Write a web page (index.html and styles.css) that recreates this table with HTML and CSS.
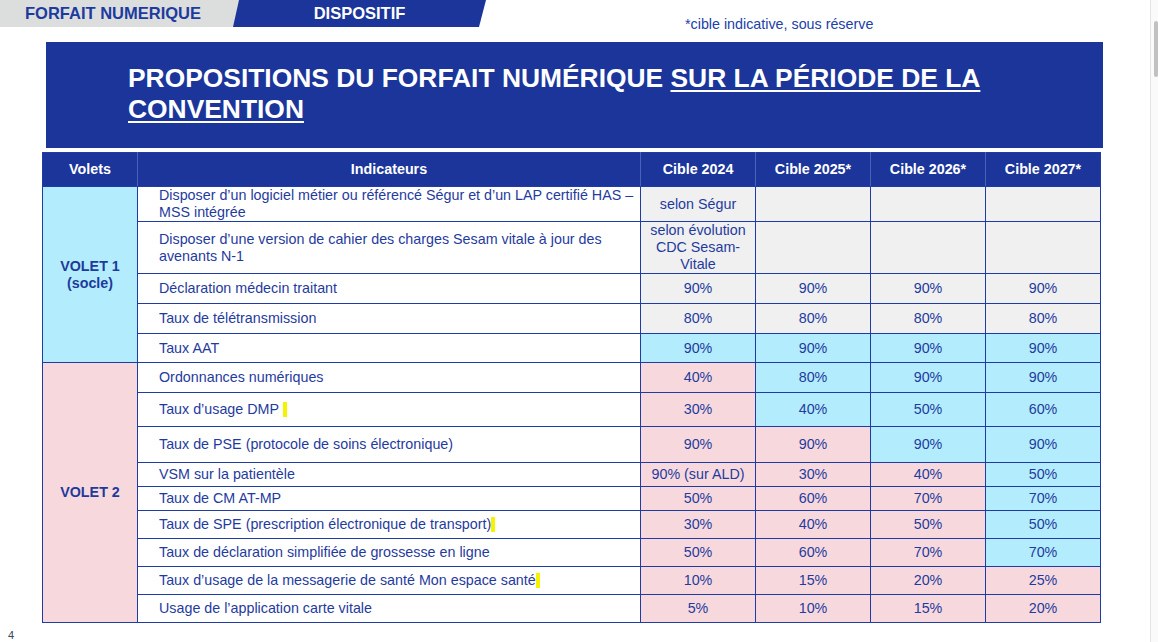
FILE: index.html
```html
<!DOCTYPE html>
<html lang="fr">
<head>
<meta charset="utf-8">
<title>Forfait numérique</title>
<link rel="stylesheet" href="styles.css">
</head>
<body>
<div class="page">
  <div class="main">
    <div class="topbar">
      <div class="tab-gray">FORFAIT NUMERIQUE</div>
      <div class="tab-blue">DISPOSITIF</div>
      <div class="footnote">*cible indicative, sous réserve</div>
    </div>

    <div class="title-box">
      <h1 class="title">PROPOSITIONS DU FORFAIT NUMÉRIQUE <span class="ul">SUR LA PÉRIODE DE LA</span><br><span class="ul">CONVENTION</span></h1>
    </div>

    <table class="grid">
      <colgroup>
        <col class="c-volet">
        <col class="c-ind">
        <col class="c-cible">
        <col class="c-cible">
        <col class="c-cible">
        <col class="c-cible">
      </colgroup>
      <thead>
        <tr class="r34">
          <th>Volets</th>
          <th>Indicateurs</th>
          <th>Cible 2024</th>
          <th>Cible 2025*</th>
          <th>Cible 2026*</th>
          <th>Cible 2027*</th>
        </tr>
      </thead>
      <tbody>
        <tr class="r35">
          <td class="volet v1" rowspan="5">VOLET 1<br>(socle)</td>
          <td class="ind">Disposer d’un logiciel métier ou référencé Ségur et d’un LAP certifié HAS – MSS intégrée</td>
          <td class="val gray">selon Ségur</td>
          <td class="val gray"></td>
          <td class="val gray"></td>
          <td class="val gray"></td>
        </tr>
        <tr class="r51">
          <td class="ind">Disposer d’une version de cahier des charges Sesam vitale à jour des avenants N-1</td>
          <td class="val gray">selon évolution CDC Sesam-Vitale</td>
          <td class="val gray"></td>
          <td class="val gray"></td>
          <td class="val gray"></td>
        </tr>
        <tr class="r30">
          <td class="ind">Déclaration médecin traitant</td>
          <td class="val gray">90%</td>
          <td class="val gray">90%</td>
          <td class="val gray">90%</td>
          <td class="val gray">90%</td>
        </tr>
        <tr class="r30">
          <td class="ind">Taux de télétransmission</td>
          <td class="val gray">80%</td>
          <td class="val gray">80%</td>
          <td class="val gray">80%</td>
          <td class="val gray">80%</td>
        </tr>
        <tr class="r29">
          <td class="ind">Taux AAT</td>
          <td class="val cyan">90%</td>
          <td class="val cyan">90%</td>
          <td class="val cyan">90%</td>
          <td class="val cyan">90%</td>
        </tr>
        <tr class="r30">
          <td class="volet v2" rowspan="9">VOLET 2</td>
          <td class="ind">Ordonnances numériques</td>
          <td class="val pink">40%</td>
          <td class="val cyan">80%</td>
          <td class="val cyan">90%</td>
          <td class="val cyan">90%</td>
        </tr>
        <tr class="r34">
          <td class="ind">Taux d’usage DMP <span class="hl"></span></td>
          <td class="val pink">30%</td>
          <td class="val cyan">40%</td>
          <td class="val cyan">50%</td>
          <td class="val cyan">60%</td>
        </tr>
        <tr class="r36">
          <td class="ind">Taux de PSE (protocole de soins électronique)</td>
          <td class="val pink">90%</td>
          <td class="val pink">90%</td>
          <td class="val cyan">90%</td>
          <td class="val cyan">90%</td>
        </tr>
        <tr class="r24">
          <td class="ind">VSM sur la patientèle</td>
          <td class="val pink">90% (sur ALD)</td>
          <td class="val pink">30%</td>
          <td class="val pink">40%</td>
          <td class="val cyan">50%</td>
        </tr>
        <tr class="r24">
          <td class="ind">Taux de CM AT-MP</td>
          <td class="val pink">50%</td>
          <td class="val pink">60%</td>
          <td class="val pink">70%</td>
          <td class="val cyan">70%</td>
        </tr>
        <tr class="r28">
          <td class="ind">Taux de SPE (prescription électronique de transport)<span class="hl"></span></td>
          <td class="val pink">30%</td>
          <td class="val pink">40%</td>
          <td class="val pink">50%</td>
          <td class="val cyan">50%</td>
        </tr>
        <tr class="r28">
          <td class="ind">Taux de déclaration simplifiée de grossesse en ligne</td>
          <td class="val pink">50%</td>
          <td class="val pink">60%</td>
          <td class="val pink">70%</td>
          <td class="val cyan">70%</td>
        </tr>
        <tr class="r28">
          <td class="ind">Taux d’usage de la messagerie de santé Mon espace santé<span class="hl"></span></td>
          <td class="val pink">10%</td>
          <td class="val pink">15%</td>
          <td class="val pink">20%</td>
          <td class="val pink">25%</td>
        </tr>
        <tr class="r28">
          <td class="ind">Usage de l’application carte vitale</td>
          <td class="val pink">5%</td>
          <td class="val pink">10%</td>
          <td class="val pink">15%</td>
          <td class="val pink">20%</td>
        </tr>
      </tbody>
    </table>

    <div class="pagenum">4</div>
  </div>
  <div class="scroll-strip"><div class="thumb"></div></div>
</div>
</body>
</html>
```

FILE: styles.css
```css
* { box-sizing: border-box; }

html, body {
  margin: 0;
  padding: 0;
  background: #ffffff;
}

body {
  width: 1158px;
  height: 642px;
  overflow: hidden;
  font-family: "Liberation Sans", Arial, sans-serif;
  color: #1f3b9e;
}

.page {
  display: flex;
  width: 1158px;
  height: 642px;
}

.main {
  width: 1150px;
  flex: none;
}

/* top tabs */
.topbar {
  display: flex;
  align-items: flex-start;
  height: 27px;
}

.tab-gray {
  flex: none;
  width: 240px;
  height: 27px;
  background: #dcdedd;
  color: #1d3b9e;
  font-weight: bold;
  font-size: 16.5px;
  line-height: 27px;
  padding-left: 25px;
  white-space: nowrap;
}

.tab-blue {
  flex: none;
  width: 253px;
  height: 27px;
  margin-left: -7px;
  background: #1b359b;
  color: #ffffff;
  font-weight: bold;
  font-size: 16.5px;
  line-height: 27px;
  text-align: center;
  clip-path: polygon(6px 0, 100% 0, calc(100% - 7px) 100%, 0 100%);
}

.footnote {
  flex: none;
  margin-left: 199px;
  margin-top: 16px;
  font-size: 14.3px;
  line-height: 16px;
  color: #2140a8;
  white-space: nowrap;
}

/* title */
.title-box {
  margin: 15px 0 0 46px;
  width: 1057px;
  height: 106px;
  background: #1b359b;
  padding: 21px 40px 0 82px;
}

.title {
  margin: 0;
  color: #ffffff;
  font-size: 26.4px;
  line-height: 31px;
  font-weight: bold;
  white-space: nowrap;
}

.ul {
  text-decoration: underline;
  text-decoration-thickness: 2px;
  text-underline-offset: 3px;
}

/* table */
.grid {
  margin: 4px 0 0 42px;
  width: 1058px;
  table-layout: fixed;
  border-collapse: collapse;
  font-size: 14.3px;
  line-height: 17px;
}

.c-volet { width: 95px; }
.c-ind { width: 503px; }
.c-cible { width: 115px; }

.grid th,
.grid td {
  border: 1px solid #1f3ba5;
  padding: 0 4px;
  vertical-align: middle;
}

.grid th {
  background: #1b359b;
  color: #ffffff;
  font-weight: bold;
  text-align: center;
  border-left-color: #4a63b9;
  border-right-color: #4a63b9;
}

.grid th:first-child { border-left-color: #1f3ba5; }
.grid th:last-child { border-right-color: #1f3ba5; }

.r24 { height: 24px; }
.r28 { height: 28px; }
.r29 { height: 29px; }
.r30 { height: 30px; }
.r34 { height: 34px; }
.r35 { height: 35px; }
.r36 { height: 36px; }
.r51 { height: 51px; }

.volet {
  font-weight: bold;
  text-align: center;
  color: #1d3a9c;
}

.v1 { background: #b3edfd; }
.v2 { background: #f7d9dd; }

.ind {
  background: #ffffff;
  padding-left: 21px !important;
}

.val {
  text-align: center;
}

.gray { background: #f0f0f0; }
.cyan { background: #b3edfd; }
.pink { background: #f7d9dd; }

.hl {
  display: inline-block;
  width: 4px;
  height: 15px;
  background: #f6f300;
  vertical-align: -3px;
}

.pagenum {
  margin: 6px 0 0 8px;
  font-size: 11px;
  line-height: 13px;
  color: #3a4660;
}

/* right strip */
.scroll-strip {
  flex: none;
  width: 8px;
  height: 642px;
  background: #fafafa;
  border-left: 1px solid #e4e4e4;
  padding: 21px 0 0 3px;
}

.thumb {
  width: 4px;
  height: 56px;
  border-radius: 2px;
  background: #c1c1c1;
}
```
